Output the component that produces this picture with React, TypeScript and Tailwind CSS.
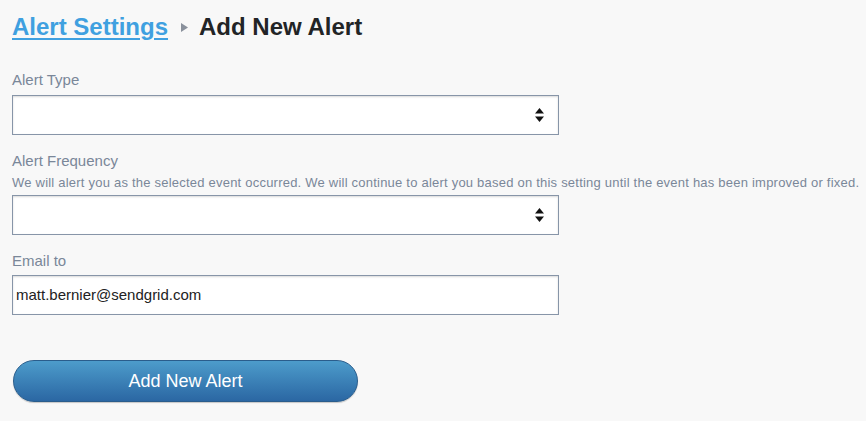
import React from "react";

function Stepper() {
  return (
    <svg width="9" height="14" viewBox="0 0 9 14" className="shrink-0">
      <path d="M4.5 0 L9 5.5 H0 Z" fill="#111" />
      <path d="M0 8.5 H9 L4.5 14 Z" fill="#111" />
    </svg>
  );
}

function SelectBox() {
  return (
    <div className="w-[547px] h-[40px] bg-white border border-[#8795a8] shadow-[inset_0_1px_2px_rgba(0,0,0,0.15)] flex items-center justify-end pr-[14px]">
      <Stepper />
    </div>
  );
}

export default function App() {
  const font = { fontFamily: '"Liberation Sans", Arial, sans-serif' };
  return (
    <div className="min-h-[421px] w-[866px] bg-[#f8f8f8] pl-[12px] pt-[12px]" style={font}>
      <div className="flex items-center h-[30px]">
        <a href="#" className="text-[24px] font-bold text-[#3fa0e0] underline decoration-2 underline-offset-[3px] leading-none">
          Alert Settings
        </a>
        <svg width="7" height="9" viewBox="0 0 7 9" className="ml-[13px] mr-[11px]">
          <path d="M0 0 L7 4.5 L0 9 Z" fill="#8a919c" />
        </svg>
        <span className="text-[24px] font-bold text-[#222426] leading-none">Add New Alert</span>
      </div>

      <div className="mt-[29px] text-[15px] text-[#7a8799] leading-[18px]">Alert Type</div>
      <div className="mt-[6px]"><SelectBox /></div>

      <div className="mt-[17px] text-[15px] text-[#7a8799] leading-[18px]">Alert Frequency</div>
      <div className="mt-[5px] text-[13px] text-[#7a8799] leading-[15px] tracking-[0.22px] whitespace-nowrap">
        We will alert you as the selected event occurred. We will continue to alert you based on this setting until the event has been improved or fixed.
      </div>
      <div className="mt-[5px]"><SelectBox /></div>

      <div className="mt-[17px] text-[15px] text-[#7a8799] leading-[18px]">Email to</div>
      <div className="mt-[5px] w-[547px] h-[40px] bg-white border border-[#8795a8] shadow-[inset_0_1px_2px_rgba(0,0,0,0.15)] flex items-center pl-[3px] text-[15px] text-[#222]">
        matt.bernier@sendgrid.com
      </div>

      <button className="mt-[45px] ml-[1px] w-[345px] h-[42px] rounded-full border border-[#2a5d8c] bg-gradient-to-b from-[#4d9ccb] to-[#2b67a3] text-white text-[18px] font-medium shadow-[0_1px_1px_rgba(0,0,0,0.2)]">
        Add New Alert
      </button>
    </div>
  );
}
